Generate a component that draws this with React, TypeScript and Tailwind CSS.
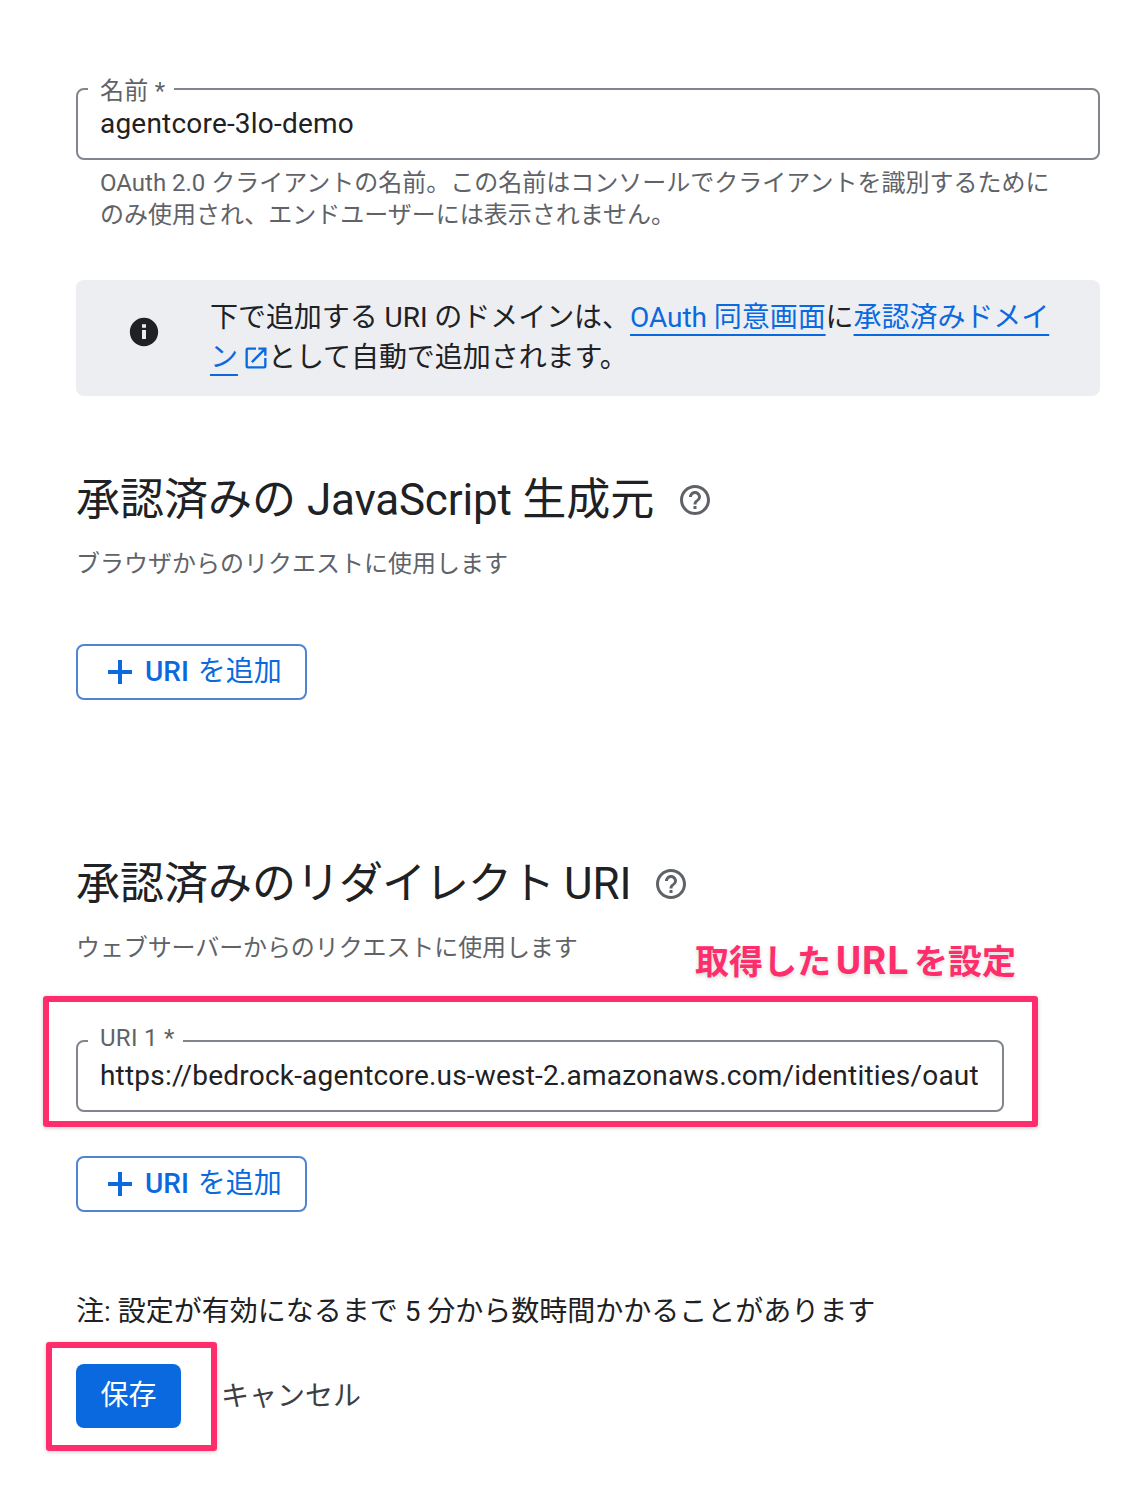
import React from 'react';

const FONT = "font-['Roboto','Noto_Sans_CJK_JP',sans-serif]";

function OutlinedField({ label, value, labelClass, className }: { label: string; value: string; labelClass: string; className?: string }) {
  return (
    <div className={`relative h-[72px] rounded-lg border-2 border-[#80868b] pl-[22px] pr-[24px] pt-[16px] ${className ?? ''}`}>
      <span className={`absolute left-[10px] bg-white pl-[12px] pr-[8px] text-[24px] leading-[24px] tracking-[0.3px] text-[#5f6368] ${labelClass}`}>{label}</span>
      <div className="overflow-hidden whitespace-nowrap text-[28px] leading-[36px] tracking-[0.2px] text-[#202124]">{value}</div>
    </div>
  );
}

function AddUriButton() {
  return (
    <button className="flex h-14 w-[231px] items-center rounded-lg border-2 border-[#5085d0] bg-white pl-[28px] text-[28px] leading-[36px] text-[#0b69e0]">
      <svg width="28" height="28" viewBox="0 0 28 28" className="mr-[11px]">
        <path d="M14 2v24M2 14h24" stroke="#0b69e0" strokeWidth="4" fill="none" />
      </svg>
      <span className="mr-[2px] font-medium">URI</span>&nbsp;を追加
    </button>
  );
}

function HelpIcon() {
  return (
    <svg width="36" height="36" viewBox="0 0 24 24" fill="#5f6368">
      <path d="M11 18h2v-2h-2v2zm1-16C6.48 2 2 6.48 2 12s4.48 10 10 10 10-4.48 10-10S17.52 2 12 2zm0 18c-4.41 0-8-3.59-8-8s3.59-8 8-8 8 3.59 8 8-3.59 8-8 8zm0-14c-2.21 0-4 1.79-4 4h2c0-1.1.9-2 2-2s2 .9 2 2c0 2-3 1.75-3 5h2c0-2.25 3-2.5 3-5 0-2.21-1.79-4-4-4z" />
    </svg>
  );
}

function SectionHeading({ children, iconClass }: { children: React.ReactNode; iconClass: string }) {
  return (
    <div className="flex h-14 items-center">
      <h2 className="text-[44px] leading-[56px] font-normal text-[#202124]">{children}</h2>
      <span className={`flex ${iconClass}`}><HelpIcon /></span>
    </div>
  );
}

const linkClass = 'text-[#0b69e0] underline decoration-2 underline-offset-[7px]';

export default function App() {
  return (
    <div className={`relative h-[1500px] w-[1130px] overflow-hidden bg-white pl-[76px] pr-[30px] pt-[88px] ${FONT}`}>
      <OutlinedField label="名前 *" value="agentcore-3lo-demo" labelClass="-top-[11px]" />
      <p className="mt-[7px] pl-6 pr-[48px] text-[24px] leading-[32px] text-[#5f6368]">
        OAuth 2.0 クライアントの名前。この名前はコンソールでクライアントを識別するためにのみ使用され、エンドユーザーには表示されません。
      </p>

      <div className="mt-[49px] flex h-[116px] rounded-lg bg-[#eceef2] pt-[18px]">
        <div className="flex w-[134px] shrink-0 justify-center pt-[17px] pl-[2px]">
          <svg width="34" height="34" viewBox="0 0 24 24" fill="#202124">
            <path d="M12 2C6.48 2 2 6.48 2 12s4.48 10 10 10 10-4.48 10-10S17.52 2 12 2zm1.4 15h-2.8v-6.5h2.8V17zm0-8h-2.8V6.5h2.8V9z" />
          </svg>
        </div>
        <p className="w-[842px] text-[28px] leading-[40px] tracking-[-0.05px] text-[#202124]">
          下で追加する URI のドメインは、<a className={linkClass}>OAuth 同意画面</a>に<a className={linkClass}>承認済みドメイン</a>
          <svg width="28" height="28" viewBox="0 0 24 24" fill="#0b69e0" className="ml-[4px] mr-[-2px] inline-block align-[-5px]">
            <path d="M19 19H5V5h7V3H5a2 2 0 0 0-2 2v14a2 2 0 0 0 2 2h14a2 2 0 0 0 2-2v-7h-2v7zM14 3v2h3.59l-9.83 9.83 1.41 1.41L19 6.41V10h2V3h-7z" />
          </svg>
          として自動で追加されます。
        </p>
      </div>

      <div className="mt-[76px]">
        <SectionHeading iconClass="ml-[23px]">承認済みの <span className="tracking-[-0.2px]">JavaScript </span>生成元</SectionHeading>
      </div>
      <p className="mt-[20px] text-[24px] leading-[32px] text-[#5f6368]">ブラウザからのリクエストに使用します</p>
      <div className="mt-[64px]"><AddUriButton /></div>

      <div className="mt-[156px]">
        <SectionHeading iconClass="ml-[21px]">承認済みの<span className="tracking-[-1px]">リダイレクト </span>URI</SectionHeading>
      </div>
      <p className="mt-[20px] text-[24px] leading-[32px] tracking-[-0.1px] text-[#5f6368]">ウェブサーバーからのリクエストに使用します</p>

      <OutlinedField label="URI 1 *" value="https://bedrock-agentcore.us-west-2.amazonaws.com/identities/oauth2/callback" labelClass="-top-[16px]" className="mt-[76px] w-[928px]" />
      <div className="mt-[44px]"><AddUriButton /></div>

      <p className="mt-[82px] text-[28px] leading-[36px] text-[#202124]">注: 設定が有効になるまで 5 分から数時間かかることがあります</p>

      <div className="mt-[34px] flex items-center">
        <button className="h-16 w-[105px] rounded-lg bg-[#0b69e0] text-[28px] text-white">保存</button>
        <span className="ml-[40px] mt-[1px] text-[28px] leading-[36px] text-[#3c4043]">キャンセル</span>
      </div>

      {/* annotations on top of the screenshot */}
      <div className="absolute top-[996px] left-[43px] h-[131px] w-[995px] rounded-[3px] border-[6px] border-[#ff2d6b] shadow-[0_1px_4px_rgba(0,0,0,0.2)]" />
      <div className="absolute top-[1342px] left-[46px] h-[109px] w-[171px] rounded-[3px] border-[6px] border-[#ff2d6b] shadow-[0_1px_4px_rgba(0,0,0,0.2)]" />
      <div className="absolute top-[939px] left-[695px] whitespace-nowrap text-[34px] leading-[44px] font-bold text-[#ff2d6b] [text-shadow:0_2px_4px_rgba(0,0,0,0.15)]">
        取得した<span className="mx-[5px] text-[38px] tracking-[1px]">URL</span>を設定
      </div>
    </div>
  );
}
